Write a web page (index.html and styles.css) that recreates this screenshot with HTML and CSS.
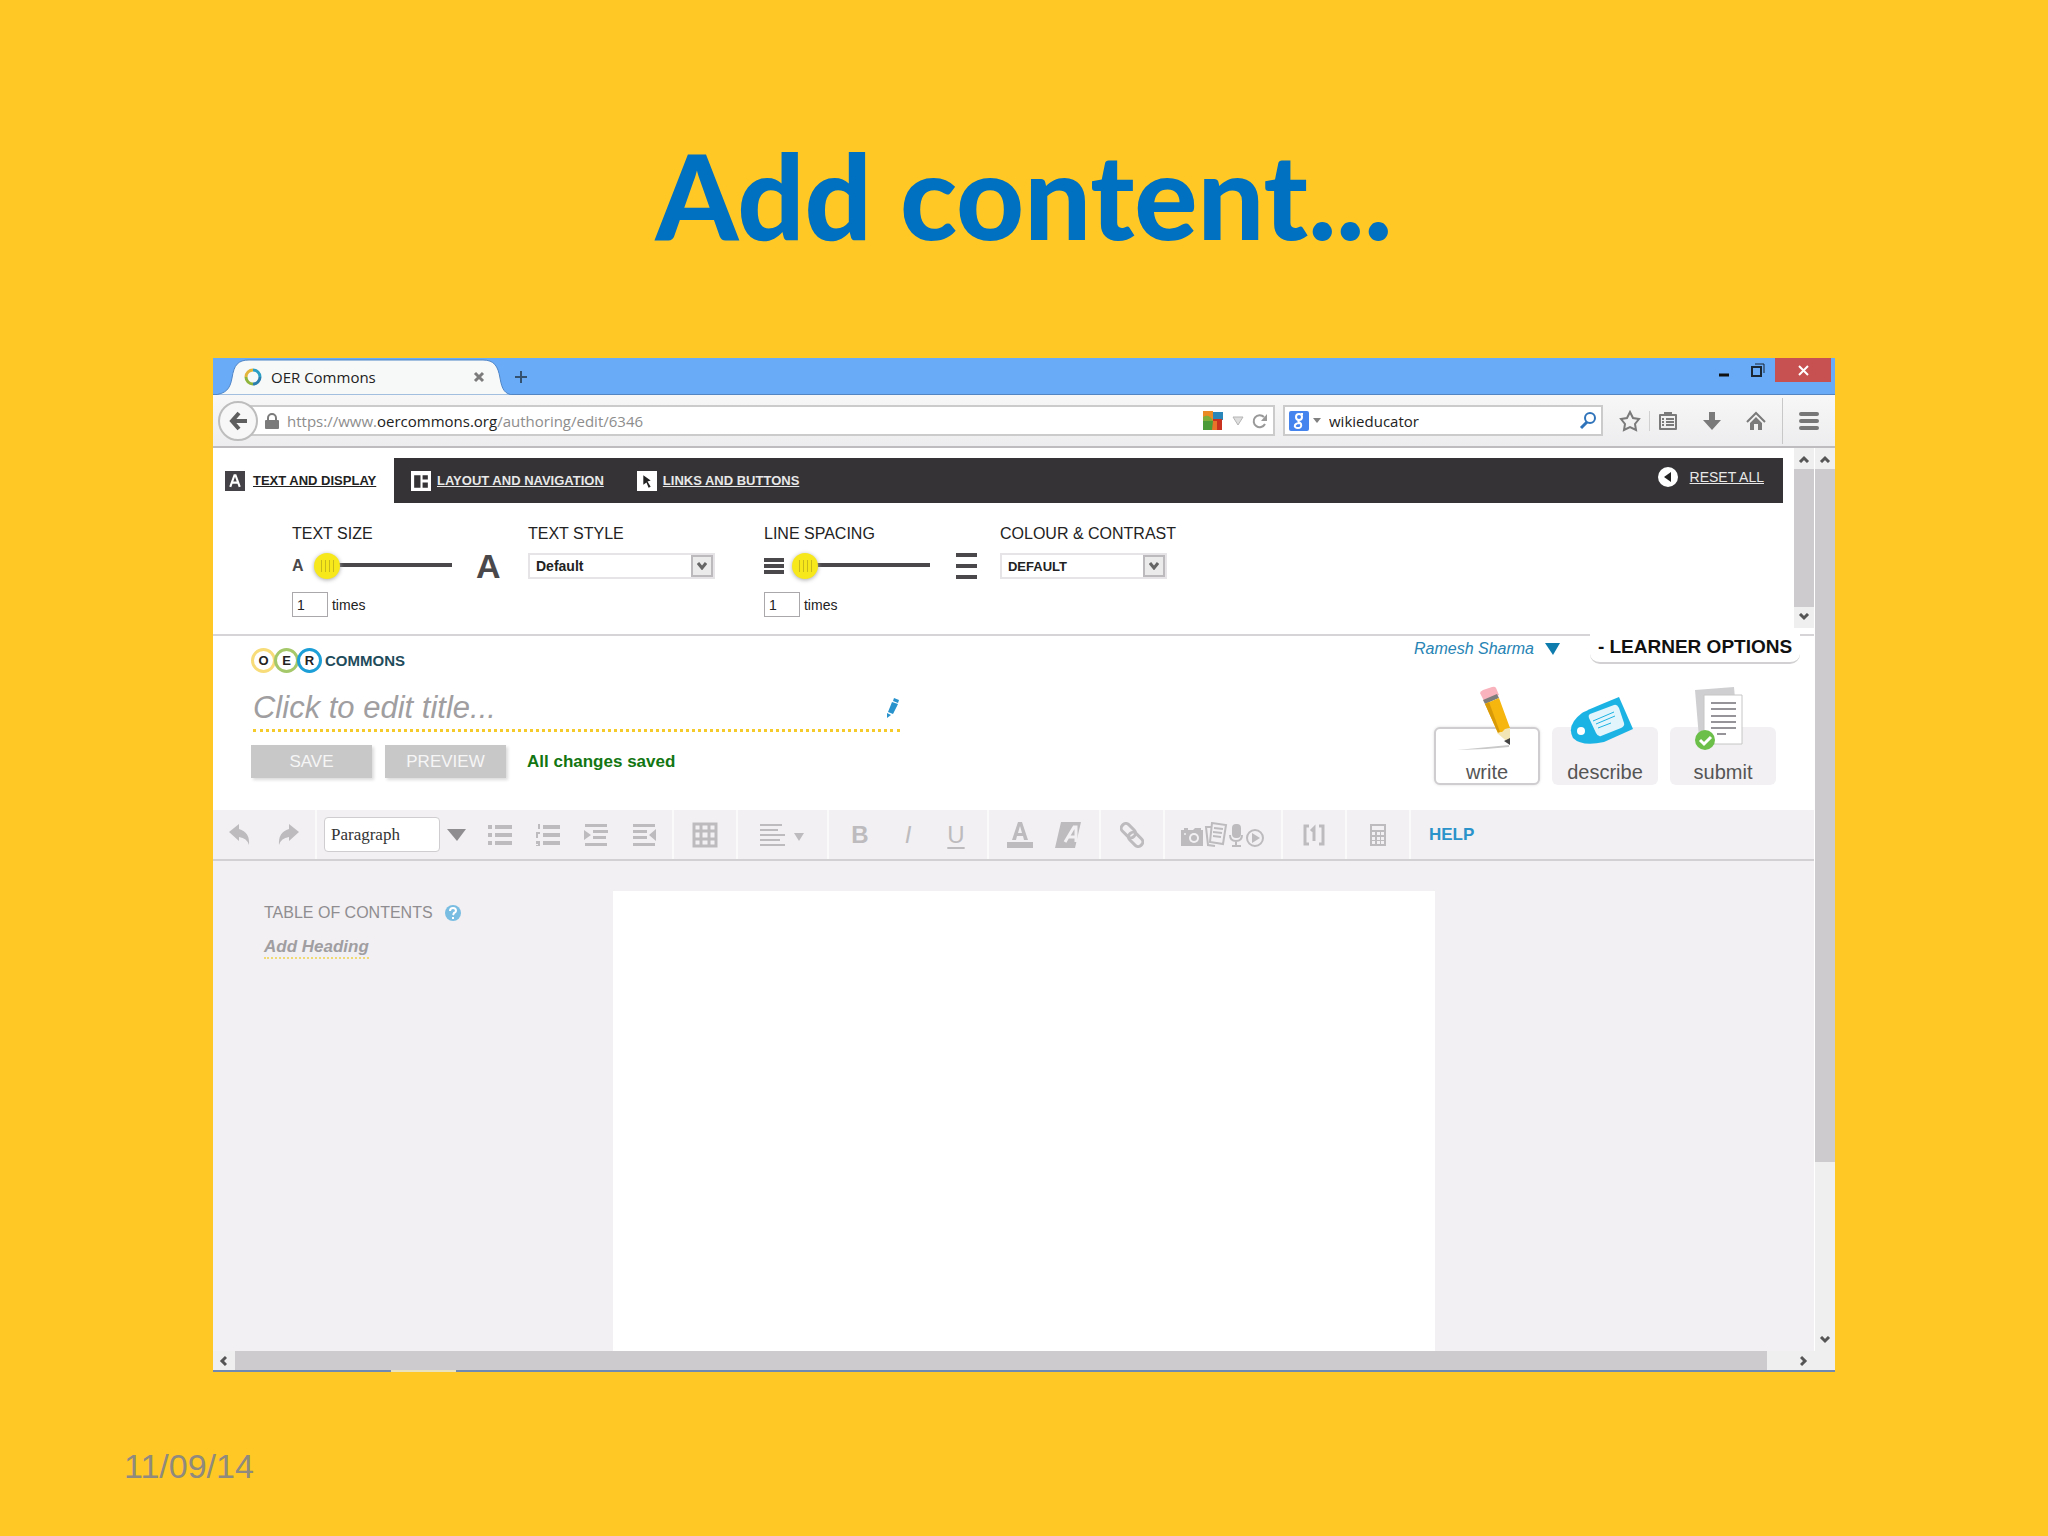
FILE: index.html
```html
<!DOCTYPE html>
<html lang="en">
<head>
    <meta charset="UTF-8">
    <meta name="viewport" content="width=device-width, initial-scale=1.0">
    <title>Add content...</title>
    <link rel="stylesheet" href="styles.css">
</head>
<body>
    <h1>Add content...</h1>

    <div class="browser">
        <div class="titlebar">
            <div class="tab">
                <svg class="tab-shape" width="300" height="37" viewBox="0 0 300 37">
                    <path d="M0 37C13 36 17 31 19 20C21 7 25 2 36 2H270C281 2 285 8 287 20C289 32 292 36 300 37Z" fill="#f7f8f8" stroke="#4f86c6" stroke-width="1"/>
                </svg>
                <svg class="favicon" width="18" height="18" viewBox="0 0 18 18" fill="none" stroke-width="3">
                    <path d="M9 2a7 7 0 0 1 7 7" stroke="#2b9fc4"/>
                    <path d="M16 9a7 7 0 0 1-7 7" stroke="#2a7fae"/>
                    <path d="M9 16a7 7 0 0 1-7-7" stroke="#8fb53c"/>
                    <path d="M2 9a7 7 0 0 1 7-7" stroke="#e3b53a"/>
                </svg>
                <span class="tab-title">OER Commons</span>
                <button class="plain" aria-label="Close tab">
                    <svg width="12" height="12" viewBox="0 0 12 12"><path d="M2 2l8 8M10 2l-8 8" stroke="#7c7c7c" stroke-width="3"/></svg>
                </button>
            </div>
            <button class="plain new-tab" aria-label="New tab">
                <svg width="14" height="14" viewBox="0 0 14 14"><path d="M7 1v12M1 7h12" stroke="#34526f" stroke-width="2"/></svg>
            </button>
            <div class="window-buttons">
                <button class="plain" aria-label="Minimize">
                    <svg width="12" height="16" viewBox="0 0 12 16"><path d="M1 13h10" stroke="#111" stroke-width="3"/></svg>
                </button>
                <button class="plain" aria-label="Restore">
                    <svg width="14" height="14" viewBox="0 0 14 14" fill="none" stroke="#1b2733"><path d="M1 4h9v9H1z" stroke-width="2"/><path d="M4 1h9v9" stroke-width="1"/></svg>
                </button>
                <button class="plain close" aria-label="Close">
                    <svg width="11" height="11" viewBox="0 0 11 11"><path d="M1 1l9 9M10 1l-9 9" stroke="#fff" stroke-width="2"/></svg>
                </button>
            </div>
        </div>

        <div class="navbar">
            <button class="back" aria-label="Back">
                <svg width="20" height="20" viewBox="0 0 20 20" fill="none" stroke="#5e5e5e" stroke-width="4"><path d="M11 2L4 10l7 8M4 10h15"/></svg>
            </button>
            <div class="field url">
                <svg width="14" height="16" viewBox="0 0 14 16"><path d="M3 8V5a4 4 0 0 1 8 0v3" fill="none" stroke="#7b7b7b" stroke-width="2"/><rect y="7" width="14" height="9" rx="1" fill="#7b7b7b"/></svg>
                <span class="address">https://www.<b>oercommons.org</b>/authoring/edit/6346</span>
                <svg width="22" height="20" viewBox="0 0 22 20"><path d="M1 0h10v10H1z" fill="#e98a24"/><path d="M1 6q6-4 10 4H1z" fill="#7fae3a"/><path d="M11 1h10v8H11z" fill="#2a86b8"/><path d="M1 10h10v9H1z" fill="#4b9b38"/><path d="M11 8h9v11h-9z" fill="#c8321f"/><path d="M11 10h4v9h-5z" fill="#e8742a"/></svg>
                <svg width="12" height="10" viewBox="0 0 12 10"><path d="M1 1h10L6 9z" fill="#ddd" stroke="#b5b5b5"/></svg>
                <svg width="16" height="16" viewBox="0 0 16 16"><path d="M13 11a6 6 0 1 1-1-7" fill="none" stroke="#999" stroke-width="2"/><path d="M15 1v7H9z" fill="#999"/></svg>
            </div>
            <div class="field search">
                <svg width="20" height="20" viewBox="0 0 20 20"><rect width="20" height="20" rx="2" fill="#4583ee"/><g fill="none" stroke="#fff" stroke-width="2"><ellipse cx="10" cy="6" rx="3" ry="3"/><path d="M12 3h2M10 9c-2 2 1 2 2 4c1 3-1 4-3 4s-4-1-3-3s3-2 5-2"/></g></svg>
                <svg width="8" height="5" viewBox="0 0 8 5"><path d="M0 0h8L4 5z" fill="#808080"/></svg>
                <input type="text" value="wikieducator" aria-label="Search">
                <svg width="18" height="18" viewBox="0 0 18 18" fill="none" stroke="#2f74bb"><circle cx="11" cy="6" r="5" stroke-width="2"/><path d="M8 10l-6 6" stroke-width="3"/></svg>
            </div>
            <div class="nav-icons">
                <svg width="22" height="22" viewBox="0 0 22 22"><path d="M11 2l3 6 6 1-4 5 1 6-6-3-6 3 1-6-4-5 6-1z" fill="none" stroke="#7a7a7a" stroke-width="2"/></svg>
                <i></i>
                <svg width="20" height="20" viewBox="0 0 20 20"><path d="M2 4h16v14H2z" fill="none" stroke="#7a7a7a" stroke-width="2" stroke-linejoin="round"/><path d="M6 1h8v4H6z" fill="#7a7a7a"/><path d="M4 8h2M8 8h8M4 11h2M8 11h8M4 14h2M8 14h8" stroke="#7a7a7a" stroke-width="2"/></svg>
                <svg class="spaced" width="20" height="20" viewBox="0 0 20 20"><path d="M7 1h6v8h6l-9 10-9-10h6z" fill="#7a7a7a"/></svg>
                <svg class="spaced" width="20" height="20" viewBox="0 0 20 20"><path d="M1 11l9-9 9 9" fill="none" stroke="#7a7a7a" stroke-width="2"/><path d="M4 12l6-6 6 6v7h-4v-6H8v6H4z" fill="#7a7a7a"/></svg>
                <i class="tall"></i>
                <svg width="20" height="18" viewBox="0 0 20 18"><path d="M2 2h16M2 9h16M2 16h16" stroke="#777" stroke-width="4" stroke-linecap="round"/></svg>
            </div>
        </div>

        <div class="viewport">
            <main>
                <section class="options">
                    <div class="options-body">
                        <nav class="options-tabs">
                            <a href="#text" class="active">
                                <svg width="20" height="20" viewBox="0 0 19 19"><path d="M0 0h19v19H0z" fill="#444246"/><path d="M5 15l4-11h1l4 11M7 11h5" fill="none" stroke="#fff" stroke-width="2"/></svg>
                                <span>TEXT AND DISPLAY</span>
                            </a>
                            <a href="#layout">
                                <svg width="20" height="20" viewBox="0 0 19 19"><path d="M0 0h19v19H0z" fill="#fff"/><path d="M3 4h6v12H3zM11 4h5v4h-5zM11 11h5v5h-5z" fill="#353336"/></svg>
                                <span>LAYOUT AND NAVIGATION</span>
                            </a>
                            <a href="#links">
                                <svg width="20" height="20" viewBox="0 0 19 19"><path d="M0 0h19v19H0z" fill="#fff"/><path d="M6 4l7 5-3 1 3 5-2 1-2-5-3 2z" fill="#222"/></svg>
                                <span>LINKS AND BUTTONS</span>
                            </a>
                            <a href="#reset" class="reset">
                                <svg width="20" height="20" viewBox="0 0 20 20"><circle cx="10" cy="10" r="10" fill="#fff"/><path d="M13 5v10l-7-5z" fill="#222"/></svg>
                                <span>RESET ALL</span>
                            </a>
                        </nav>
                        <div class="controls">
                            <div class="control">
                                <label for="textSize">TEXT SIZE</label>
                                <div class="slider">
                                    <span class="small-a">A</span>
                                    <input type="range" id="textSize" min="1" max="3" value="1">
                                    <span class="big-a">A</span>
                                </div>
                                <div class="times"><input type="text" id="sizeTimes" value="1"><label for="sizeTimes">times</label></div>
                            </div>
                            <div class="control">
                                <label for="textStyle">TEXT STYLE</label>
                                <div class="drop">
                                    <select id="textStyle"><option>Default</option></select>
                                    <span class="drop-arrow"><svg width="10" height="8" viewBox="0 0 10 8"><path d="M1 1l4 5 4-5" fill="none" stroke="#666" stroke-width="3"/></svg></span>
                                </div>
                            </div>
                            <div class="control">
                                <label for="lineSpacing">LINE SPACING</label>
                                <div class="slider">
                                    <svg class="tight-lines" width="20" height="16" viewBox="0 0 20 16"><path d="M0 2h20M0 8h20M0 14h20" stroke="#4a484b" stroke-width="4"/></svg>
                                    <input type="range" id="lineSpacing" min="1" max="3" value="1">
                                    <svg class="wide-lines" width="21" height="26" viewBox="0 0 21 26"><path d="M0 2h21M0 13h21M0 24h21" stroke="#4a484b" stroke-width="4"/></svg>
                                </div>
                                <div class="times"><input type="text" id="lineTimes" value="1"><label for="lineTimes">times</label></div>
                            </div>
                            <div class="control">
                                <label for="contrast">COLOUR &amp; CONTRAST</label>
                                <div class="drop narrow">
                                    <select id="contrast"><option>DEFAULT</option></select>
                                    <span class="drop-arrow"><svg width="10" height="8" viewBox="0 0 10 8"><path d="M1 1l4 5 4-5" fill="none" stroke="#666" stroke-width="3"/></svg></span>
                                </div>
                            </div>
                        </div>
                    </div>
                    <div class="scroll-v inner">
                        <svg width="12" height="8" viewBox="0 0 12 8"><path d="M2 7l4-4 4 4" fill="none" stroke="#555" stroke-width="3"/></svg>
                        <div class="thumb"></div>
                        <svg width="12" height="8" viewBox="0 0 12 8"><path d="M2 1l4 4 4-4" fill="none" stroke="#555" stroke-width="3"/></svg>
                    </div>
                </section>

                <header class="page-header">
                    <div class="title-block">
                        <a href="#home" class="logo"><span class="o">O</span><span class="e">E</span><span class="r">R</span><b>COMMONS</b></a>
                        <div class="title-edit">
                            <input type="text" placeholder="Click to edit title..." aria-label="Title">
                            <svg width="14" height="20" viewBox="0 0 14 20" fill="#2792cc"><path d="M8 0l5 2-1 3-5-2zM6 4l6 2-5 10-5-2zM1 15l4 2-4 3z"/></svg>
                        </div>
                        <div class="actions">
                            <button>SAVE</button>
                            <button>PREVIEW</button>
                            <span class="status">All changes saved</span>
                        </div>
                    </div>
                    <div class="side-block">
                        <div class="user-row">
                            <a href="#user" class="user">Ramesh Sharma
                                <svg width="15" height="12" viewBox="0 0 15 12"><path d="M0 0h15L8 12z" fill="#0f7cae"/></svg>
                            </a>
                            <button class="learner">- LEARNER OPTIONS</button>
                        </div>
                        <div class="steps">
                            <button class="current">
                                <svg width="56" height="66" viewBox="0 0 56 66">
                                    <path d="M1 65l52-5v2q-26 3-52 3z" fill="#c9c9c9"/>
                                    <path d="M24 8q1-2 3-3l9-3q3-1 4 1l3 7-15 6z" fill="#f9b3bd"/>
                                    <path d="M27 15l14-6 2 4-14 6z" fill="#7d7d7d"/>
                                    <path d="M29 19l14-6 11 30-4 1-3 3-5 1z" fill="#f6b60e"/>
                                    <path d="M29 19l4-2 11 30-2 1z" fill="#d99a08"/>
                                    <path d="M41 48l5-1 3-3 5-1v16z" fill="#f3e6b6"/>
                                    <path d="M48 56l6-3v7z" fill="#444"/>
                                </svg>
                                write
                            </button>
                            <button>
                                <svg width="64" height="66" viewBox="0 0 64 66">
                                    <path d="M49 10l14 32-29 13q-22 5-31-4q-7-13 9-25q5-3 37-16z" fill="#1bb3e3"/>
                                    <circle cx="11" cy="44" r="4" fill="#fff"/>
                                    <path d="M20 27l24-9q3-1 5 3l5 15q1 3-3 5l-20 8q-3 1-5-3l-7-15q-1-3 1-4z" fill="#e2f5fc"/>
                                    <path d="M23 34l21-9M26 37l19-8M28 41l13-5" stroke="#1bb3e3" stroke-width="1"/>
                                </svg>
                                describe
                            </button>
                            <button>
                                <svg width="50" height="66" viewBox="0 0 50 66">
                                    <path d="M0 3l39-3 4 46-39 5z" fill="#cfcfd2"/>
                                    <path d="M9 8h38v49H9z" fill="#fff" stroke="#c6c6c6"/>
                                    <path d="M16 16h25M16 22h25M16 29h25M16 35h25M16 41h25M22 47h9" stroke="#969399" stroke-width="2"/>
                                    <circle cx="10" cy="53" r="10" fill="#6cc04a"/>
                                    <path d="M5 53l4 4 7-7" fill="none" stroke="#fff" stroke-width="3"/>
                                </svg>
                                submit
                            </button>
                        </div>
                    </div>
                </header>

                <div class="toolbar">
                    <div class="group">
                        <button aria-label="Undo"><svg width="22" height="22" viewBox="0 0 22 22"><path d="M0 8l10-8v5q11 3 10 16q-2-7-10-8v4z"/></svg></button>
                        <button aria-label="Redo"><svg width="22" height="22" viewBox="0 0 22 22"><path d="M22 8L12 0v5Q1 8 2 21q2-7 10-8v4z"/></svg></button>
                    </div>
                    <div class="group format">
                        <select aria-label="Paragraph format"><option>Paragraph</option></select>
                        <svg class="format-arrow" width="19" height="12" viewBox="0 0 19 12"><path d="M0 0h19l-9 12z"/></svg>
                        <button aria-label="Bulleted list"><svg width="24" height="22" viewBox="0 0 24 22"><path d="M0 1h4v4H0zM0 9h4v4H0zM0 17h4v4H0zM7 1h17v4H7zM7 9h17v4H7zM7 17h17v4H7z"/></svg></button>
                        <button aria-label="Numbered list"><svg width="24" height="22" viewBox="0 0 24 22"><path d="M2 0h2v5H2zM0 8h4v2H2v4H0zM0 17h4v5H0v-1h2v-1H0zM7 1h17v4H7zM7 9h17v4H7zM7 17h17v4H7z"/></svg></button>
                        <button aria-label="Indent"><svg width="24" height="24" viewBox="0 0 24 24"><path d="M1 1h22v3H1zM9 7h15v3H9zM9 13h13v3H9zM1 20h22v3H1zM0 7l7 5-7 5z"/></svg></button>
                        <button aria-label="Outdent"><svg width="24" height="24" viewBox="0 0 24 24"><path d="M1 1h22v3H1zM1 7h14v3H1zM1 13h14v3H1zM1 20h22v3H1zM24 6l-7 6 7 6z"/></svg></button>
                    </div>
                    <div class="group">
                        <button aria-label="Table"><svg width="26" height="26" viewBox="0 0 26 26"><path d="M2 2h22v22H2zM2 9h22M2 17h22M9 2v22M17 2v22" fill="none" stroke="#bdbbbd" stroke-width="3"/></svg></button>
                    </div>
                    <div class="group">
                        <button class="align" aria-label="Align"><svg width="44" height="22" viewBox="0 0 44 22"><path d="M0 1h22M0 6h18M0 11h25M0 16h20M0 21h25" fill="none" stroke="#bdbbbd" stroke-width="2"/><path d="M34 9h10l-5 8z"/></svg></button>
                    </div>
                    <div class="group">
                        <button class="bold">B</button>
                        <button class="italic">I</button>
                        <button class="underline">U</button>
                    </div>
                    <div class="group">
                        <button aria-label="Text colour"><svg width="26" height="26" viewBox="0 0 26 26"><path d="M0 20h26v6H0zM5 18L11 0h4l6 18h-4l-1-4h-6l-1 4zM11 11h4l-2-7z" fill-rule="evenodd"/></svg></button>
                        <button aria-label="Highlight"><svg width="26" height="26" viewBox="0 0 26 26"><path d="M6 0h20l-6 26H0z"/><path d="M10 20l9-15h2v15M13 15h8" fill="none" stroke="#f2f0f3" stroke-width="3"/></svg></button>
                    </div>
                    <div class="group">
                        <button aria-label="Link"><svg width="24" height="26" viewBox="0 0 24 26"><g fill="none" stroke="#bdbbbd" stroke-width="3"><rect x="0" y="4" width="16" height="9" rx="4" transform="rotate(45 8 9)"/><rect x="8" y="13" width="16" height="9" rx="4" transform="rotate(45 16 17)"/></g></svg></button>
                    </div>
                    <div class="group">
                        <button class="media" aria-label="Media">
                            <svg width="84" height="26" viewBox="0 0 84 26">
                                <path d="M0 8h3V6h4v2h5l2-2h6v2h2v16H0z"/><circle cx="13" cy="16" r="5" fill="#f2f0f3"/><circle cx="13" cy="16" r="3"/><circle cx="4" cy="12" r="1" fill="#f2f0f3"/>
                                <path d="M31 1l14 2-3 19-13-2zM30 5h-5l2 18 7 1" fill="none" stroke="#bdbbbd" stroke-width="2"/><path d="M33 6l9 1M32 10l9 1M32 14l8 1" stroke="#bdbbbd" stroke-width="2"/>
                                <rect x="51" y="2" width="9" height="14" rx="4"/><path d="M49 13q0 6 6 6t6-6M55 19v4M51 24h9" fill="none" stroke="#bdbbbd" stroke-width="2"/>
                                <circle cx="74" cy="16" r="8" fill="none" stroke="#bdbbbd" stroke-width="2"/><path d="M71 11l8 5-8 5z"/>
                            </svg>
                        </button>
                    </div>
                    <div class="group">
                        <button aria-label="Footnote"><svg width="22" height="22" viewBox="0 0 22 22"><path d="M6 2H2v18h4M16 2h4v18h-4M8 7l3-3v13" fill="none" stroke="#bdbbbd" stroke-width="3"/></svg></button>
                    </div>
                    <div class="group">
                        <button aria-label="Calculator"><svg width="16" height="22" viewBox="0 0 16 22"><path d="M0 0h16v22H0z"/><path d="M2 2h12v4H2zM2 8h3v3H2zM7 8h3v3H7zM11 8h3v3h-3zM2 13h3v3H2zM7 13h3v3H7zM11 13h3v3h-3zM2 17h3v3H2zM7 17h3v3H7zM11 17h3v3h-3z" fill="#f2f0f3"/></svg></button>
                    </div>
                    <a href="#help" class="help">HELP</a>
                </div>

                <div class="editor">
                    <aside>
                        <h2>TABLE OF CONTENTS
                            <svg width="16" height="16" viewBox="0 0 16 16"><circle cx="8" cy="8" r="8" fill="#79bde2"/><path d="M5 6q0-3 3-3t3 3q0 1-2 2l-1 2M8 12v2" fill="none" stroke="#fff" stroke-width="2"/></svg>
                        </h2>
                        <a href="#heading">Add Heading</a>
                    </aside>
                    <div class="paper" contenteditable="true"></div>
                </div>
            </main>
            <div class="scroll-v outer">
                <svg width="12" height="8" viewBox="0 0 12 8"><path d="M2 7l4-4 4 4" fill="none" stroke="#555" stroke-width="3"/></svg>
                <div class="thumb"></div>
                <svg width="12" height="8" viewBox="0 0 12 8"><path d="M2 1l4 4 4-4" fill="none" stroke="#555" stroke-width="3"/></svg>
            </div>
        </div>

        <div class="scroll-h">
            <svg width="8" height="12" viewBox="0 0 8 12"><path d="M7 2L3 6l4 4" fill="none" stroke="#555" stroke-width="3"/></svg>
            <div class="thumb"></div>
            <svg width="8" height="12" viewBox="0 0 8 12"><path d="M1 2l4 4-4 4" fill="none" stroke="#555" stroke-width="3"/></svg>
        </div>
        <div class="taskbar-edge"></div>
    </div>

    <footer>11/09/14</footer>
</body>
</html>
```
FILE: styles.css
```css
:root {
    --slide-bg: #ffc825;
    --title-blue: #0070c0;
    --dark: #353336;
    --panel: #f2f0f3;
    --icon: #bdbbbd;
    --thumb: #cdcbcd;
    --link: #2a93c9;
}

* {
    box-sizing: border-box;
}

body {
    margin: 0;
    min-height: 100vh;
    background: var(--slide-bg);
    font-family: "Liberation Sans", Arial, sans-serif;
    color: #222;
}

svg {
    display: block;
    flex: none;
}

button,
input,
select {
    font-family: inherit;
    margin: 0;
}

h1 {
    margin: 0;
    padding-top: 124px;
    height: 358px;
    text-align: center;
    font-family: Lato, sans-serif;
    font-size: 118px;
    line-height: 142px;
    font-weight: 900;
    color: var(--title-blue);
}

.browser {
    width: 79.2%;
    margin: 0 auto;
    background: #fff;
}

.plain {
    border: 0;
    padding: 0;
    background: none;
}

/* title bar */
.titlebar {
    display: flex;
    height: 37px;
    background: #6aabf8;
    border-bottom: 1px solid #5285c2;
}

.tab {
    position: relative;
    display: flex;
    align-items: center;
    width: 300px;
    height: 37px;
    padding: 1px 28px 0 31px;
    font-family: "Open Sans", sans-serif;
    font-size: 15px;
}

.tab-shape {
    position: absolute;
    left: 0;
    top: 0;
}

.favicon,
.tab-title,
.tab .plain {
    position: relative;
}

.tab-title {
    flex: 1;
    margin-left: 9px;
}

.new-tab {
    margin-left: 1px;
    padding-top: 2px;
}

.window-buttons {
    display: flex;
    align-items: flex-start;
    margin-left: auto;
    padding-right: 4px;
}

.window-buttons .plain {
    display: flex;
    align-items: center;
    justify-content: center;
    width: 34px;
    height: 24px;
}

.window-buttons .close {
    width: 56px;
    background: #c75050;
}

/* navigation bar */
.navbar {
    display: flex;
    align-items: center;
    height: 53px;
    padding: 0 16px 0 5px;
    background: linear-gradient(#f7f7f7, #ededef);
    border-bottom: 2px solid #bebcbf;
}

.back {
    position: relative;
    display: flex;
    align-items: center;
    justify-content: center;
    width: 40px;
    height: 40px;
    border: 2px solid #bdbdbd;
    border-radius: 50%;
    background: #f7f7f7;
}

.field {
    display: flex;
    align-items: center;
    height: 31px;
    border: 2px solid #cbcbcb;
    background: #fff;
    font-family: "Open Sans", sans-serif;
    font-size: 15px;
}

.url {
    flex: 1;
    gap: 8px;
    margin-left: -8px;
    padding: 0 5px 0 13px;
    color: #8d8d8d;
}

.address {
    flex: 1;
}

.address b {
    font-weight: 400;
    color: #222;
}

.search {
    gap: 4px;
    width: 320px;
    margin-left: 8px;
    padding: 0 4px;
}

.search input {
    flex: 1;
    min-width: 0;
    padding: 0 0 0 4px;
    border: 0;
    font-size: 15px;
    color: #222;
}

.nav-icons {
    display: flex;
    align-items: center;
    gap: 8px;
    margin-left: 16px;
}

.nav-icons .spaced {
    margin-left: 16px;
}

.nav-icons i {
    width: 1px;
    height: 20px;
    background: #d0d0d0;
}

.nav-icons .tall {
    height: 46px;
    margin: 0 8px;
    background: #c8c8c8;
}

/* scroll bars */
.scroll-v {
    display: flex;
    flex-direction: column;
    align-items: center;
    width: 20px;
    padding: 7px 0;
    background: #f0eff0;
}

.scroll-v .thumb {
    width: 100%;
    margin: 6px 0;
    background: var(--thumb);
}

.scroll-v.inner {
    height: 180px;
}

.inner .thumb {
    flex: 1;
}

.outer .thumb {
    height: 78%;
    margin-bottom: auto;
}

.scroll-h {
    display: flex;
    align-items: center;
    height: 19px;
    padding: 0 27px 0 6px;
    background: #f0eff0;
}

.scroll-h .thumb {
    flex: 1;
    height: 100%;
    margin: 0 33px 0 8px;
    background: var(--thumb);
}

.taskbar-edge {
    height: 2px;
    background: linear-gradient(90deg, #7089b0 11%, #e9e2c0 11%, #e9e2c0 15%, #7089b0 15%);
}

.viewport {
    display: flex;
    min-height: 903px;
}

main {
    flex: 1;
    display: flex;
    flex-direction: column;
    min-width: 0;
    border-right: 1px solid #fff;
}

/* display options */
.options {
    display: flex;
    height: 188px;
    border-bottom: 2px solid #d6d4d6;
}

.options-body {
    flex: 1;
    margin-right: 11px;
    padding-top: 10px;
}

.options-tabs {
    display: flex;
    height: 45px;
    background: var(--dark);
}

.options-tabs a {
    display: flex;
    align-items: center;
    gap: 6px;
    padding: 0 16px 0 17px;
    font-size: 13px;
    font-weight: 700;
    color: #e8e8e8;
}

.options-tabs .active {
    gap: 8px;
    width: 181px;
    padding: 0 0 0 12px;
    background: #fff;
    color: #222;
}

.options-tabs .reset {
    gap: 12px;
    margin-left: auto;
    padding: 0 19px 7px;
    font-size: 14px;
    font-weight: 400;
}

.controls {
    display: flex;
    padding: 21px 0 0 79px;
}

.control {
    width: 236px;
}

.control > label {
    display: block;
    height: 20px;
    font-size: 16px;
    line-height: 20px;
    color: #222;
}

.slider {
    display: flex;
    align-items: center;
    height: 44px;
}

.small-a,
.big-a {
    font-weight: 700;
    color: #4a484b;
}

.small-a {
    width: 22px;
    font-size: 16px;
}

.big-a {
    margin-left: 24px;
    font-size: 34px;
}

.tight-lines {
    margin-right: 8px;
}

.wide-lines {
    margin-left: 26px;
}

input[type="range"] {
    appearance: none;
    width: 138px;
    height: 26px;
    background: linear-gradient(#4a484b, #4a484b) 12px 10px / 126px 4px no-repeat;
}

input[type="range"]::-webkit-slider-thumb {
    appearance: none;
    width: 26px;
    height: 26px;
    border-radius: 50%;
    background: repeating-linear-gradient(90deg, #c9b91a 0 1px, #f7e81c 1px 4px) 7px 7px / 13px 12px no-repeat #f7e81c;
    box-shadow: 0 1px 4px #aaa;
}

.times {
    display: flex;
    align-items: center;
    gap: 4px;
    margin-top: 4px;
    font-size: 14px;
}

.times input {
    width: 36px;
    height: 25px;
    padding: 0 4px;
    border: 1px solid #aaa8aa;
    font-size: 14px;
    color: #222;
}

.drop {
    position: relative;
    width: 187px;
    margin-top: 9px;
}

.drop.narrow {
    width: 167px;
}

.drop-arrow {
    position: absolute;
    top: 2px;
    right: 2px;
    display: flex;
    align-items: center;
    justify-content: center;
    width: 22px;
    height: 22px;
    border: 2px solid #bcbabc;
    background: #ebebeb;
    pointer-events: none;
}

.drop select {
    appearance: none;
    width: 100%;
    height: 26px;
    padding: 0 6px;
    border: 2px solid #e6e4e6;
    border-radius: 0;
    background: #fff;
    font-size: 14px;
    font-weight: 700;
    color: #222;
}

.drop.narrow select {
    font-size: 13px;
}

/* page header */
.page-header {
    display: flex;
    justify-content: space-between;
    height: 174px;
    padding-left: 38px;
}

.title-block {
    width: 649px;
    padding-top: 11px;
}

.logo {
    display: flex;
    align-items: center;
    height: 26px;
    font-size: 15px;
    color: #1f4c5c;
    text-decoration: none;
}

.logo span {
    width: 25px;
    height: 25px;
    margin-right: -2px;
    border: 3px solid #f7dc79;
    border-radius: 50%;
    font-size: 13px;
    font-weight: 700;
    line-height: 19px;
    text-align: center;
    color: #222;
}

.logo .e {
    border-color: #a5c86a;
}

.logo .r {
    border-color: #1c9ed6;
}

.logo b {
    margin-left: 5px;
}

.title-edit {
    display: flex;
    align-items: center;
    height: 46px;
    margin: 13px 0 13px 2px;
    border-bottom: 3px dotted #f5cb2c;
}

.title-edit input {
    flex: 1;
    padding: 0;
    border: 0;
    font-size: 31px;
    font-style: italic;
}

.title-edit input::placeholder {
    color: #a09ea0;
}

.actions {
    display: flex;
    align-items: center;
    gap: 13px;
}

.actions button {
    width: 121px;
    height: 33px;
    border: 0;
    background: #c9c8c9;
    box-shadow: 2px 2px 3px #dcdcdc;
    font-size: 17px;
    color: #f6f6f6;
}

.status {
    margin-left: 8px;
    font-size: 17px;
    font-weight: 700;
    color: #127612;
}

.side-block {
    display: flex;
    flex-direction: column;
    justify-content: space-between;
    padding: 0 14px 25px 0;
}

.user-row {
    display: flex;
    align-items: flex-start;
    justify-content: flex-end;
    gap: 30px;
}

.user {
    display: flex;
    align-items: center;
    gap: 11px;
    padding-top: 3px;
    font-size: 16px;
    font-style: italic;
    line-height: 20px;
    color: #2784b4;
    text-decoration: none;
}

.learner {
    position: relative;
    width: 210px;
    height: 32px;
    margin-top: -4px;
    padding: 0;
    border: 0;
    border-bottom: 2px solid #d2d0d2;
    border-radius: 0 0 10px 10px;
    background: #fff;
    font-size: 19px;
    font-weight: 700;
    line-height: 22px;
    color: #111;
}

.steps {
    display: flex;
    justify-content: flex-end;
    gap: 12px;
    padding-right: 24px;
}

.steps button {
    position: relative;
    width: 106px;
    height: 58px;
    padding: 31px 0 0;
    border: 0;
    border-radius: 6px;
    background: var(--panel);
    font-size: 20px;
    line-height: 24px;
    color: #555;
}

.steps .current {
    border: 2px solid #cfcdcf;
    background: #fff;
    box-shadow: 0 0 3px #ddd;
}

.steps svg {
    position: absolute;
    left: 0;
    right: 6px;
    bottom: 32px;
    margin: 0 auto;
}

/* editor toolbar */
.toolbar {
    display: flex;
    height: 51px;
    background: var(--panel);
    border-bottom: 2px solid #d2d0d3;
}

.group {
    display: flex;
    align-items: center;
    padding: 0 7px;
    border-right: 2px solid #fbfafb;
}

.group:first-child {
    padding: 0 3px;
}

.toolbar button {
    display: flex;
    align-items: center;
    justify-content: center;
    width: 48px;
    height: 36px;
    padding: 0;
    border: 0;
    background: none;
    font-size: 24px;
    color: var(--icon);
}

.toolbar svg {
    fill: var(--icon);
}

.toolbar .bold {
    font-weight: 700;
}

.toolbar .italic {
    font-style: italic;
}

.toolbar .underline {
    text-decoration: underline;
    text-underline-offset: 4px;
}

.toolbar .align {
    width: 75px;
}

.toolbar .media {
    width: 102px;
}

.toolbar .format {
    padding: 0 4px 0 7px;
}

.format select {
    appearance: none;
    width: 116px;
    height: 35px;
    padding: 0 6px;
    border: 1px solid #cfcdcf;
    border-radius: 4px;
    background: #fff;
    font-family: "Liberation Serif", serif;
    font-size: 17px;
    color: #333;
}

.toolbar .format-arrow {
    margin: 0 10px 0 7px;
    fill: #8f8d8f;
}

.help {
    padding-left: 18px;
    font-size: 17px;
    font-weight: 700;
    line-height: 49px;
    color: var(--link);
    text-decoration: none;
}

/* editing area */
.editor {
    flex: 1;
    display: grid;
    grid-template-columns: 25% 1fr 379px;
    padding-top: 30px;
    background: var(--panel);
}

aside {
    padding: 12px 0 0 51px;
}

aside h2 {
    display: flex;
    align-items: center;
    gap: 12px;
    margin: 0 0 14px;
    font-size: 16px;
    font-weight: 400;
    line-height: 20px;
    color: #8f8d90;
}

aside a {
    display: inline-block;
    border-bottom: 2px dotted #f0d873;
    font-size: 17px;
    font-weight: 700;
    font-style: italic;
    line-height: 20px;
    color: #a09ea1;
    text-decoration: none;
}

.paper {
    background: #fff;
}

footer {
    padding: 74px 0 0 124px;
    font-size: 34px;
    line-height: 40px;
    color: #8f8a7d;
}
```
